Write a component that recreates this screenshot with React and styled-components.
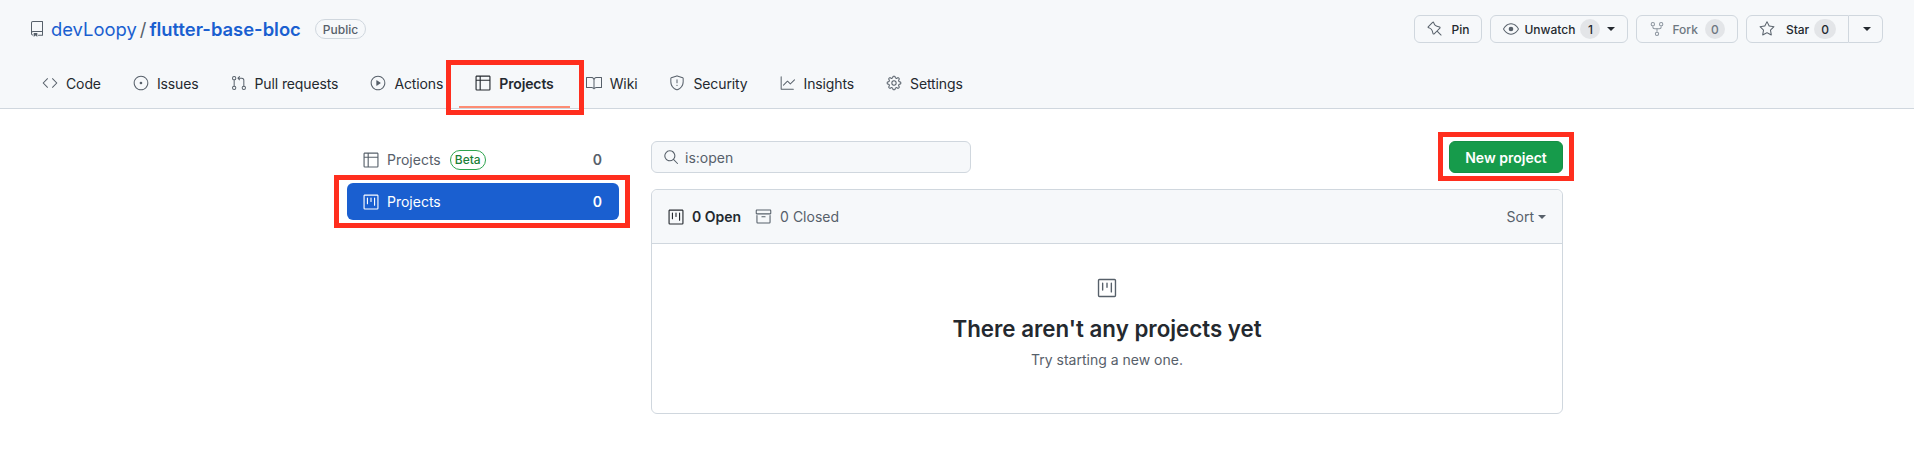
import styled, { createGlobalStyle } from "styled-components";
import {
  GoRepo, GoCode, GoIssueOpened, GoGitPullRequest, GoPlay, GoTable, GoBook, GoShield,
  GoGraph, GoGear, GoPin, GoEye, GoRepoForked, GoStar, GoProject, GoArchive, GoSearch,
} from "react-icons/go";

const GlobalStyle = createGlobalStyle`
  body {
    margin: 0;
    background: #fff;
    color: #24292f;
    font-family: Inter, "Liberation Sans", sans-serif;
    font-size: 14px;
  }
`;

// these two glyphs come out a bit small at 16, so draw them at 18 in a 16 slot
const TableIcon = styled(GoTable)`
  margin: 0 -1px;
`;

const ProjectIcon = styled(GoProject)`
  margin: 0 -1px;
`;

const tabs = [
  { label: "Code", icon: GoCode, size: 16 },
  { label: "Issues", icon: GoIssueOpened, size: 16 },
  { label: "Pull requests", icon: GoGitPullRequest, size: 16 },
  { label: "Actions", icon: GoPlay, size: 16 },
  { label: "Projects", icon: TableIcon, size: 18, active: true },
  { label: "Wiki", icon: GoBook, size: 16 },
  { label: "Security", icon: GoShield, size: 16 },
  { label: "Insights", icon: GoGraph, size: 16 },
  { label: "Settings", icon: GoGear, size: 16 },
];

function App() {
  return (
    <>
      <GlobalStyle />
      <Header>
        <TopRow>
          <Title>
            <GoRepo size={16} color="#57606a" />
            <Owner>devLoopy</Owner>
            <Slash>/</Slash>
            <RepoName>flutter-base-bloc</RepoName>
            <PublicLabel>Public</PublicLabel>
          </Title>
          <Actions>
            <ActionButton $gap={9}>
              <GoPin size={16} color="#57606a" />Pin
            </ActionButton>
            <ActionButton $gap={5}>
              <GoEye size={16} color="#57606a" />Unwatch<Counter>1</Counter>
              <Caret $dark />
            </ActionButton>
            <ActionButton $gap={7} $disabled>
              <GoRepoForked size={16} color="#8c959f" />Fork<Counter>0</Counter>
            </ActionButton>
            <SplitGroup>
              <ActionButton as="div" $gap={5} $left>
                <GoStar size={16} color="#57606a" />
                <StarLabel>Star</StarLabel>
                <Counter $tight>0</Counter>
              </ActionButton>
              <CaretButton><Caret $dark /></CaretButton>
            </SplitGroup>
          </Actions>
        </TopRow>
        <Nav>
          {tabs.map((t) => (
            <Tab key={t.label} $active={t.active}>
              <t.icon size={t.size} color={t.active ? "#24292f" : "#57606a"} />
              {t.label}
              {t.active && <Marker $top={0} $right={-14} $bottom={-9} $left={-13} />}
            </Tab>
          ))}
        </Nav>
      </Header>

      <Page>
        <Sidebar>
          <SideRow>
            <TableIcon size={18} color="#57606a" />
            Projects
            <BetaLabel>Beta</BetaLabel>
            <SideCount>0</SideCount>
          </SideRow>
          <SideRow $selected>
            <ProjectIcon size={18} color="#fff" />
            Projects
            <SideCount>0</SideCount>
            <Marker $top={-8} $right={-11} $bottom={-8} $left={-13} />
          </SideRow>
        </Sidebar>

        <Main>
          <Toolbar>
            <SearchBox>
              <GoSearch size={16} color="#57606a" />
              is:open
            </SearchBox>
            <NewButton>
              New project
              <Marker $top={-10} $right={-12} $bottom={-9} $left={-12} />
            </NewButton>
          </Toolbar>
          <Panel>
            <PanelHeader>
              <OpenState>
                <ProjectIcon size={18} color="#24292f" />0 Open
              </OpenState>
              <ClosedState>
                <GoArchive size={17} color="#57606a" />0 Closed
              </ClosedState>
              <SortMenu>Sort<Caret /></SortMenu>
            </PanelHeader>
            <Blank>
              <GoProject size={22} color="#57606a" />
              <BlankTitle>There aren't any projects yet</BlankTitle>
              <BlankText>Try starting a new one.</BlankText>
            </Blank>
          </Panel>
        </Main>
      </Page>
    </>
  );
}

export default App;

const Header = styled.header`
  background: #f6f8fa;
  border-bottom: 1px solid #d0d7de;
  padding-top: 15px;
`;

const TopRow = styled.div`
  height: 28px;
  margin-bottom: 17px;
  padding: 0 31px 0 29px;
  display: flex;
  align-items: center;
  justify-content: space-between;
`;

const Title = styled.div`
  display: flex;
  align-items: center;
  font-size: 18.4px;
`;

const Owner = styled.a`
  margin-left: 6px;
  color: #1a5fd0;
`;

const Slash = styled.span`
  margin: 0 3px;
  color: #57606a;
`;

const RepoName = styled.a`
  color: #1a5fd0;
  font-weight: 600;
`;

const PublicLabel = styled.span`
  margin-left: 14px;
  height: 20px;
  padding: 0 7px;
  display: flex;
  align-items: center;
  border: 1px solid #d0d7de;
  border-radius: 10px;
  font-size: 12px;
  font-weight: 500;
  color: #57606a;
  box-sizing: border-box;
`;

const Actions = styled.div`
  display: flex;
  gap: 8px;
`;

const ActionButton = styled.button`
  height: 28px;
  padding: 0 12px;
  display: flex;
  align-items: center;
  gap: ${(p) => p.$gap}px;
  box-sizing: border-box;
  background: #f6f8fa;
  border: 1px solid #d0d7de;
  border-radius: ${(p) => (p.$left ? "6px 0 0 6px" : "6px")};
  font: 500 12px Inter, "Liberation Sans", sans-serif;
  color: ${(p) => (p.$disabled ? "#6e7781" : "#24292f")};
`;

const StarLabel = styled.span`
  margin-left: 6px;
`;

const SplitGroup = styled.div`
  display: flex;
`;

const CaretButton = styled.div`
  width: 34px;
  height: 28px;
  display: flex;
  align-items: center;
  justify-content: center;
  box-sizing: border-box;
  background: #f6f8fa;
  border: 1px solid #d0d7de;
  border-left: 0;
  border-radius: 0 6px 6px 0;
`;

const Counter = styled.span`
  min-width: 20px;
  height: 20px;
  padding: 0 ${(p) => (p.$tight ? 7 : 6)}px;
  display: flex;
  align-items: center;
  justify-content: center;
  box-sizing: border-box;
  background: #e3e5e8;
  border-radius: 10px;
  font-size: 12px;
  font-weight: 500;
`;

const Nav = styled.nav`
  height: 48px;
  padding-left: 26px;
  display: flex;
`;

const Tab = styled.a`
  position: relative;
  height: 48px;
  padding: 0 16px;
  display: flex;
  align-items: center;
  gap: 8px;
  box-sizing: border-box;
  letter-spacing: -0.12px;
  font-weight: ${(p) => (p.$active ? 600 : 400)};
  color: #24292f;
  border-bottom: 2px solid ${(p) => (p.$active ? "#fd8c73" : "transparent")};
`;

/* red annotation rectangle drawn over the screenshot */
const Marker = styled.span`
  position: absolute;
  top: ${(p) => p.$top}px;
  right: ${(p) => p.$right}px;
  bottom: ${(p) => p.$bottom}px;
  left: ${(p) => p.$left}px;
  border: 5px solid #ff2e1e;
  pointer-events: none;
`;

const Page = styled.div`
  padding: 32px 351px 0 347px;
  display: flex;
  gap: 32px;
`;

const Sidebar = styled.aside`
  width: 272px;
  display: flex;
  flex-direction: column;
  gap: 5px;
`;

const SideRow = styled.a`
  position: relative;
  height: 37px;
  padding: 0 17px 0 16px;
  display: flex;
  align-items: center;
  gap: 8px;
  border-radius: 6px;
  color: ${(p) => (p.$selected ? "#fff" : "#57606a")};
  background: ${(p) => (p.$selected ? "#1a5fd0" : "transparent")};
`;

const BetaLabel = styled.span`
  height: 20px;
  padding: 0 4px;
  margin-left: 1px;
  display: flex;
  align-items: center;
  box-sizing: border-box;
  border: 1px solid #2da44e;
  border-radius: 10px;
  color: #1a7f37;
  font-size: 12px;
  font-weight: 500;
`;

const SideCount = styled.span`
  margin-left: auto;
  font-size: 14px;
  font-weight: 600;
`;

const Main = styled.main`
  flex: 1;
  display: flex;
  flex-direction: column;
  gap: 16px;
`;

const Toolbar = styled.div`
  display: flex;
  justify-content: space-between;
`;

const SearchBox = styled.div`
  width: 320px;
  height: 32px;
  padding: 0 11px;
  display: flex;
  align-items: center;
  gap: 6px;
  box-sizing: border-box;
  background: #f6f8fa;
  border: 1px solid #d0d7de;
  border-radius: 6px;
  color: #57606a;
`;

const NewButton = styled.button`
  position: relative;
  width: 114px;
  height: 32px;
  padding: 0;
  background: #169b4b;
  border: 1px solid #148f45;
  border-radius: 6px;
  color: #fff;
  font: 600 14px Inter, "Liberation Sans", sans-serif;
`;

const Panel = styled.section`
  height: 225px;
  box-sizing: border-box;
  border: 1px solid #d0d7de;
  border-radius: 6px;
  display: flex;
  flex-direction: column;
`;

const PanelHeader = styled.div`
  height: 53px;
  flex-shrink: 0;
  padding: 0 16px;
  display: flex;
  align-items: center;
  background: #f6f8fa;
  border-bottom: 1px solid #d0d7de;
  border-radius: 6px 6px 0 0;
`;

const OpenState = styled.span`
  display: flex;
  align-items: center;
  gap: 8px;
  font-weight: 600;
`;

const ClosedState = styled.span`
  display: flex;
  align-items: center;
  gap: 8px;
  margin-left: 14px;
  color: #57606a;
`;

const SortMenu = styled.span`
  margin-left: auto;
  display: flex;
  align-items: center;
  gap: 4px;
  color: #57606a;
`;

const Caret = styled.i`
  width: 0;
  height: 0;
  margin-left: ${(p) => (p.$dark ? 2 : 0)}px;
  border: 4px solid transparent;
  border-top-color: ${(p) => (p.$dark ? "#24292f" : "#57606a")};
  border-bottom: 0;
`;

const Blank = styled.div`
  padding-top: 33px;
  display: flex;
  flex-direction: column;
  align-items: center;
`;

const BlankTitle = styled.h3`
  margin: 15px 0 0;
  font-size: 22.3px;
  line-height: 30px;
  font-weight: 600;
`;

const BlankText = styled.p`
  margin: 5px 0 0;
  line-height: 21px;
  color: #57606a;
`;
